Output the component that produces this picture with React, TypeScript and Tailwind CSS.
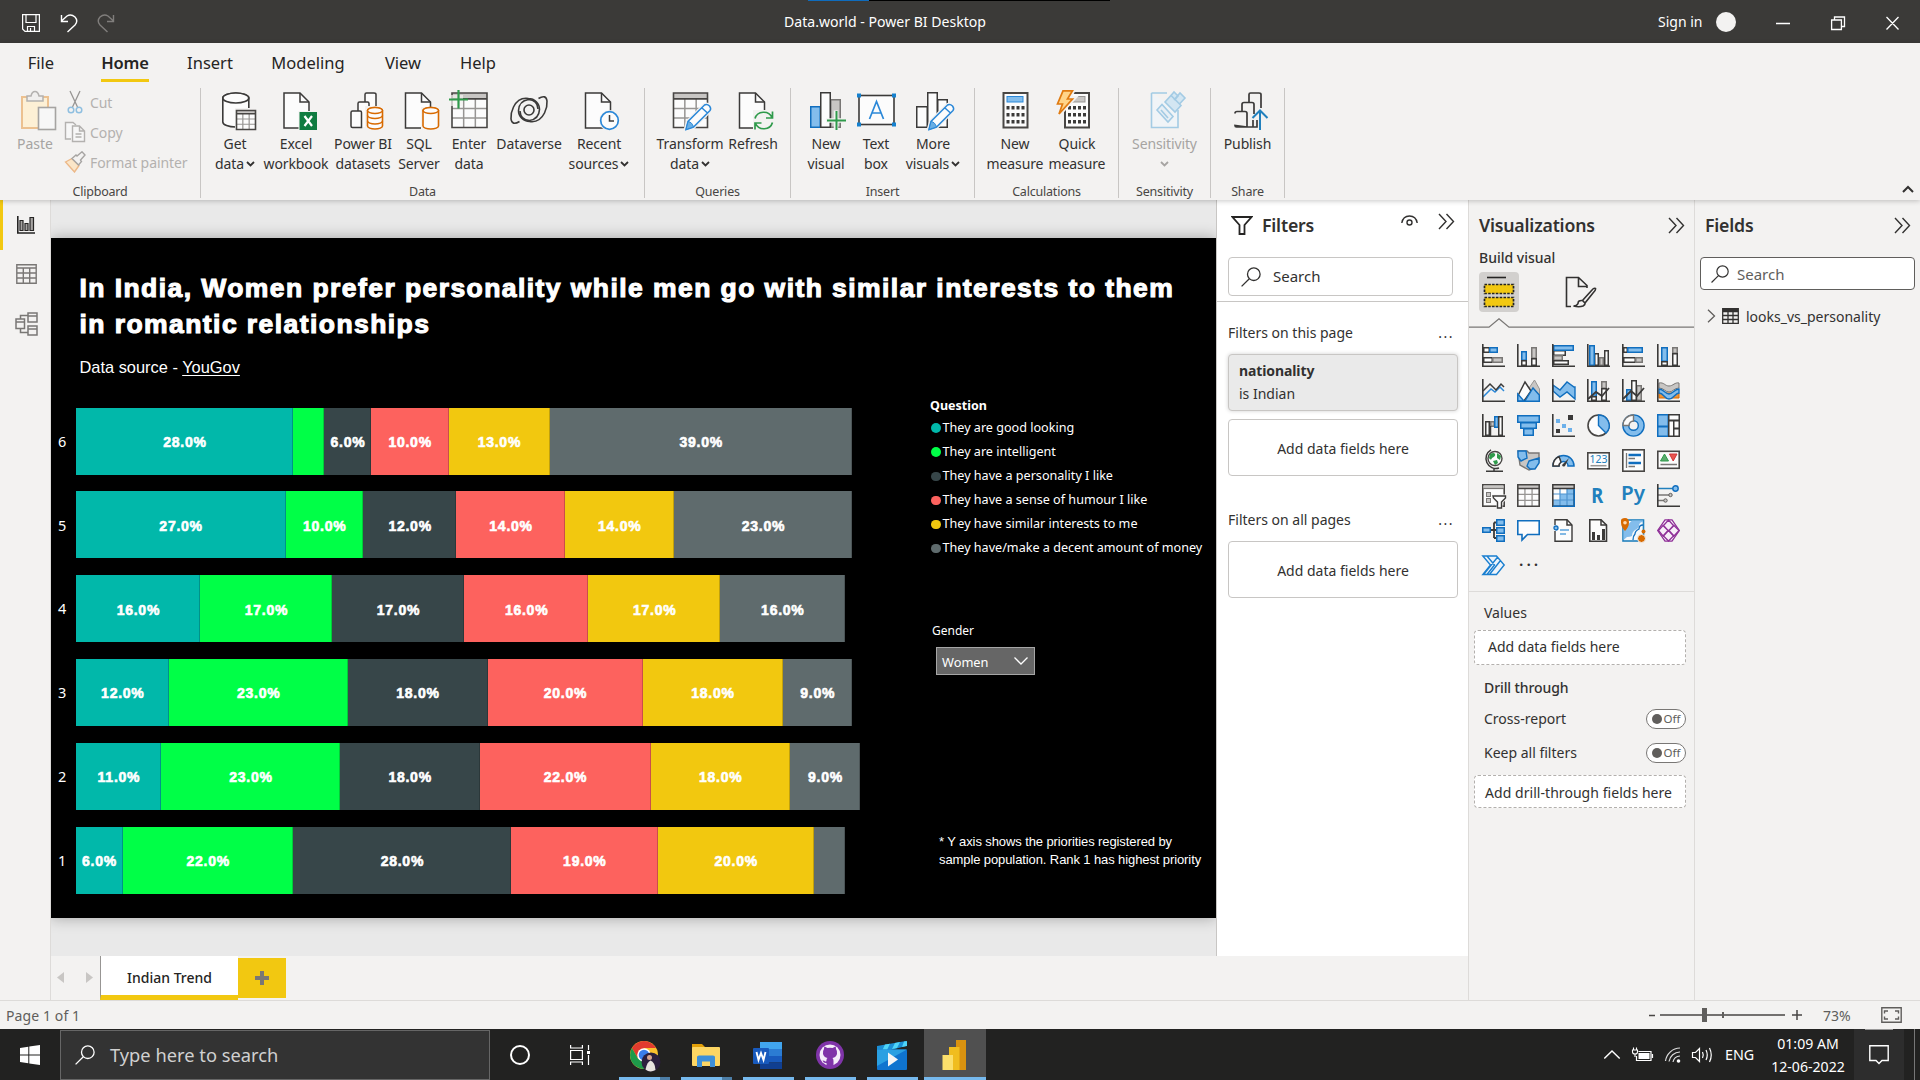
import React from "react";

type Tone = "b" | "g" | "w" | "k" | "o";

const FILL: Record<Tone, string> = { b: "#83bdec", g: "#c8c6c4", w: "#fcfcfc", k: "#3b3a39", o: "#ef9438" };
const LINE: Record<Tone, string> = { b: "#106ebe", g: "#797775", w: "#3b3a39", k: "#3b3a39", o: "#d86a00" };

function Box({ x, y, w, h, t, s = 1.5 }: { x: number; y: number; w: number; h: number; t: Tone; s?: number }) {
  return <rect x={x + s / 2} y={y + s / 2} width={w - s} height={h - s} fill={FILL[t]} stroke={LINE[t]} strokeWidth={s} />;
}

function Ln({ d, c = "#3b3a39", w = 1.5, f = "none" }: { d: string; c?: string; w?: number; f?: string }) {
  return <path d={d} stroke={c} strokeWidth={w} fill={f} />;
}

/* ---------- Ribbon icons, drawn on a 48 x 44 grid ---------- */

const PageShape = ({ x }: { x: number }) => (
  <>
    <Ln d={`M${x + 1} 3H${x + 17}L${x + 26} 12V38H${x + 1}Z`} f="#fcfcfc" />
    <Ln d={`M${x + 17} 3V12H${x + 26}`} />
  </>
);

const Pencil = () => (
  <>
    <path d="M19.500 40L22 31.500L38.500 15Q41 13.500 43.500 16Q45.500 18.500 44 20.500L27.500 37Z" fill="#fcfcfc" stroke="#f3f2f1" strokeWidth="4" />
    <Ln d="M20 39.500L22 31.500L38.500 15Q41 13.500 43.500 16Q45.500 18.500 44 20.500L27.500 37ZM36 18L41.500 23" c="#2b88d8" f="#fcfcfc" />
    <path d="M20 39.500L22 31.500Q26 32 27.500 37Z" fill="#69afe5" stroke="#2b88d8" />
  </>
);

const Cyl = ({ x, y, w, h, c, rings = false }: { x: number; y: number; w: number; h: number; c: string; rings?: boolean }) => {
  const r = w / 2;
  const k = w > 20 ? 5 : 3;
  return (
    <>
      <path
        d={`M${x} ${y + k}V${y + h - k}A${r} ${k} 0 0 0 ${x + w} ${y + h - k}V${y + k}A${r} ${k} 0 0 0 ${x} ${y + k}`}
        fill="#fcfcfc"
        stroke={c}
        strokeWidth="1.600"
      />
      <ellipse cx={x + r} cy={y + k} rx={r} ry={k} fill="#fcfcfc" stroke={c} strokeWidth="1.600" />
      {rings && (
        <Ln
          c={c}
          d={`M${x} ${y + 8}A${r} ${k} 0 0 0 ${x + w} ${y + 8}M${x} ${y + 13.5}A${r} ${k} 0 0 0 ${x + w} ${y + 13.5}`}
        />
      )}
    </>
  );
};

const GridShape = ({ x, y, w, h, s = 1.5 }: { x: number; y: number; w: number; h: number; s?: number }) => {
  const hd = h * 0.17;
  const rh = (h - hd) / 3;
  return (
    <>
      <rect x={x} y={y} width={w} height={h} fill="#fcfcfc" />
      <rect x={x} y={y} width={w} height={hd} fill="#c8c6c4" />
      <path
        d={`M${x} ${y + hd + rh}h${w}M${x} ${y + hd + 2 * rh}h${w}M${x + w / 3} ${y + hd}V${y + h}M${x + (2 * w) / 3} ${y + hd}V${y + h}`}
        stroke="#979593"
        strokeWidth={s}
      />
      <path d={`M${x} ${y}h${w}v${h}h${-w}zM${x} ${y + hd}h${w}`} stroke="#484644" strokeWidth="1.600" fill="none" />
    </>
  );
};

const Keys = ({ x }: { x: number }) => (
  <>
    {[0, 1, 2].map((r) =>
      [0, 1, 2, 3].map((c) => <rect key={`${r}${c}`} x={x + 4 + c * 5} y={16 + r * 7} width="3" height="3.500" fill="#3b3a39" />),
    )}
  </>
);

const RIBBON: Record<string, React.ReactNode> = {
  get: (
    <>
      <Cyl x={11.8} y={3} w={26} h={34} c="#3b3a39" />
      <rect x="24" y="18" width="22" height="23" fill="#f3f2f1" />
      <GridShape x={25.5} y={20.5} w={19} h={19} s={1.2} />
    </>
  ),
  excel: (
    <>
      <PageShape x={11} />
      <rect x="26.500" y="21" width="19" height="20" fill="#f3f2f1" />
      <rect x="27.500" y="22" width="17.500" height="18" fill="#107c41" />
      <Ln d="M32.500 26L40 36M40 26L32.500 36" c="#fff" w={2.2} />
    </>
  ),
  pbi: (
    <>
      <Ln d="M26 37V4.500Q26 3 27.500 3H35Q37 3 37 4.500V16" f="#fcfcfc" />
      <Ln d="M19 37V13.500Q19 12 20.500 12H28.500Q30 12 30 13.500V37" f="#fcfcfc" />
      <Ln d="M12 22.500Q12 21 13.500 21H21Q22.500 21 22.500 22.500V37.500H13.500Q12 37.500 12 36Z" f="#fcfcfc" />
      <rect x="26" y="16" width="20" height="25" fill="#f3f2f1" />
      <Cyl x={28.5} y={17.5} w={15} h={21.5} c="#d86a00" rings />
    </>
  ),
  sql: (
    <>
      <PageShape x={9.5} />
      <rect x="26" y="17" width="20" height="23" fill="#f3f2f1" />
      <Cyl x={28} y={17.5} w={15.5} h={21.5} c="#d86a00" />
    </>
  ),
  enter: (
    <>
      <GridShape x={7} y={3} w={35} h={34.500} />
      <path d="M4 5H18V16H4Z" fill="#f3f2f1" opacity=".7" />
      <Ln d="M4 9.500H23M13.500 0V18.500" c="#2f9a4b" w={2.2} />
    </>
  ),
  dataverse: (
    <g fill="none" stroke="#3b3a39" strokeWidth="1.600">
      <circle cx="24" cy="20" r="5" />
      <path d="M33.500 8.500Q41 4 42 11Q42.500 17 39.500 23Q34.500 33 24.500 31.500A11 11 0 0 1 13.500 20.500Q14 11 23.500 9.500Q32.500 10 33 19" />
      <path d="M14.500 31.500Q7 36 6 29Q5.500 23 8.500 17Q13.500 7 23.500 8.500A11 11 0 0 1 34.500 19.500Q34 29 24.500 30.500Q15.500 30 15 21" />
    </g>
  ),
  recent: (
    <>
      <PageShape x={9.5} />
      <circle cx="34.500" cy="30.500" r="10.500" fill="#f3f2f1" />
      <circle cx="34.500" cy="30.500" r="8.800" fill="#fcfcfc" stroke="#2b88d8" strokeWidth="1.700" />
      <Ln d="M34.500 25V31H39" />
    </>
  ),
  transform: (
    <>
      <GridShape x={7.5} y={3} w={34} h={34.500} />
      <Pencil />
    </>
  ),
  refresh: (
    <>
      <PageShape x={9.5} />
      <rect x="24" y="20" width="22" height="22" fill="#f3f2f1" />
      <g fill="none" stroke="#2f9a4b" strokeWidth="1.700">
        <path d="M26 28.500A9 8.500 0 0 1 43 27.500M43.500 21.500V28H37" />
        <path d="M43.500 32.500A9 8.500 0 0 1 26.500 33.500M26 39.500V33H32.500" />
      </g>
    </>
  ),
  newvisual: (
    <>
      <Box x={8} y={16} w={11} h={22} t="b" />
      <Box x={28} y={9} w={11} h={29} t="g" />
      <Box x={18} y={2} w={11} h={36} t="w" />
      <path d="M24 30.500H44M34 20.500V40" stroke="#f3f2f1" strokeWidth="4.500" />
      <Ln d="M25 30.500H44M34.500 21V40" c="#2f9a4b" w={2} />
    </>
  ),
  textbox: (
    <>
      <rect x="7" y="5.500" width="35" height="29" fill="#fcfcfc" stroke="#3b3a39" strokeWidth="1.600" />
      {[
        [5, 3.5],
        [40, 3.5],
        [5, 32.5],
        [40, 32.5],
      ].map(([x, y]) => (
        <rect key={`${x}-${y}`} x={x} y={y} width="4" height="4" fill="#1581cf" />
      ))}
      <Ln d="M17.500 29L24.500 11.500L31.500 29M20 23H29" c="#2b88d8" w={1.7} />
    </>
  ),
  morevisuals: (
    <>
      <Box x={7} y={16} w={12} h={22} t="w" />
      <Box x={28} y={9} w={11} h={29} t="w" />
      <Box x={18} y={2} w={11} h={36} t="w" />
      <Pencil />
    </>
  ),
  measure: (
    <>
      <rect x="12.500" y="3" width="24" height="34.500" fill="#fcfcfc" stroke="#484644" strokeWidth="2" />
      <rect x="16" y="6.500" width="16" height="5.500" fill="#83bdec" stroke="#2b88d8" />
      <Keys x={11.5} />
    </>
  ),
  quick: (
    <>
      <rect x="12" y="3" width="24" height="34.500" fill="#fcfcfc" stroke="#484644" strokeWidth="2" />
      <rect x="18" y="6.500" width="14" height="5.500" fill="#c8c6c4" stroke="#979593" />
      <Keys x={11} />
      <path d="M10 0H20L15.500 8.500H20L5 25L8.500 14H4Z" fill="#ffd489" stroke="#f3f2f1" strokeWidth="5" />
      <path d="M10 0.800H19.500L14.500 9H19.500L6 24L9.500 14H4.500Z" fill="#ffd489" stroke="#e07a10" strokeWidth="1.700" />
    </>
  ),
  sensitivity: (
    <g stroke="#a3cbe4" strokeWidth="1.600" fill="#e7eff5">
      <path d="M10.500 3H26M37 20V37.500H10.500V3" fill="#f0f4f7" />
      <path d="M16 20L21 14.500L32 26.500L27 32Z" />
      <path d="M20 20L27 28" fill="none" />
      <path d="M24 12L30 5.500L40 15.500L34 22ZM30 5.500L33 2L37 6L34 9.500M33 10L39 3L44 8L38 14.500" fill="#d3e6f2" />
    </g>
  ),
  publish: (
    <>
      <Ln d="M25 12V4.500Q25 3 26.500 3H35Q37 3 37 4.500V18" w={1.7} />
      <Ln d="M18 21V14.500Q18 12.500 20 12.500H28Q30 12.500 30 14.500V24" w={1.7} />
      <Ln d="M11 23.500Q11 21.500 13 21.500H21Q23 21.500 23 23.500V37H33V30M23 37H12.500Q11 37 11 35.500ZM29 37V30" w={1.7} />
      <Ln d="M36 40V20.500M28.500 28L36 20.500L43.500 28" c="#2180bd" w={2} />
    </>
  ),
};

function Chev({ className = "" }: { className?: string }) {
  return (
    <svg width="9" height="6" viewBox="0 0 9 6" className={`inline-block ${className}`}>
      <path d="M1 1L4.500 4.500L8 1" fill="none" stroke="currentColor" strokeWidth="1.800" />
    </svg>
  );
}

function Tool({ w, icon, a, b, chev, dim }: { w: string; icon: string; a: string; b?: string; chev?: boolean; dim?: boolean }) {
  return (
    <div className={`flex shrink-0 flex-col items-center tracking-[-0.12px] ${w} ${dim ? "text-[#a6a4a2]" : "text-[#323130]"}`}>
      <svg width="48" height="44" viewBox="0 0 48 44" className="shrink-0">
        {RIBBON[icon]}
      </svg>
      <span className="text-[14px] leading-5 whitespace-nowrap">{a}</span>
      <span className="flex h-5 items-center gap-0.5 text-[14px] leading-5 whitespace-nowrap">
        {b}
        {chev && <Chev />}
      </span>
    </div>
  );
}

function Group({ w, pad, label, children }: { w: string; pad: string; label: string; children: React.ReactNode }) {
  return (
    <div className={`flex h-[110px] shrink-0 flex-col border-r border-[#c8c6c4] ${w}`}>
      <div className={`flex h-[97px] shrink-0 pt-0.5 ${pad}`}>{children}</div>
      <div className="text-center text-[12.5px] leading-[14px] tracking-[-0.2px] text-[#484644]">{label}</div>
    </div>
  );
}

/* ---------- Visual gallery icons, drawn on a 23 x 23 grid ---------- */

const Axis = () => <Ln d="M.8 0V22.200H23" w={1.6} />;
const GALLERY: React.ReactNode[] = [
  <><Box x={1} y={3} w={7} h={6} t="w" /><Box x={7} y={3} w={9} h={6} t="b" /><Box x={1} y={13} w={10} h={6} t="w" /><Box x={10} y={13} w={11} h={6} t="g" /><Axis /></>,
  <><Box x={4} y={7} w={6} h={10} t="b" /><Box x={4} y={16} w={6} h={6} t="w" /><Box x={14} y={3} w={6} h={12} t="g" /><Box x={14} y={14} w={6} h={8} t="w" /><Axis /></>,
  <><Box x={1} y={6} w={13} h={6} t="w" /><Box x={1} y={11} w={10} h={6} t="g" /><Box x={1} y={16} w={16} h={5} t="w" /><Box x={1} y={1} w={21} h={6} t="b" /><Axis /></>,
  <><Box x={7} y={9} w={5} h={13} t="w" /><Box x={12} y={13} w={5} h={9} t="g" /><Box x={17} y={6} w={5} h={16} t="w" /><Box x={2} y={1} w={6} h={21} t="b" /><Axis /></>,
  <><Box x={1} y={3} w={5} h={6} t="w" /><Box x={5} y={3} w={16} h={6} t="b" /><Box x={1} y={13} w={13} h={6} t="w" /><Box x={13} y={13} w={8} h={6} t="g" /><Axis /></>,
  <><Box x={4} y={3} w={7} h={15} t="b" /><Box x={4} y={17} w={7} h={5} t="w" /><Box x={15} y={3} w={6} h={7} t="g" /><Box x={15} y={9} w={6} h={13} t="w" /><Axis /></>,

  <><Ln d="M1 18L9 10L13 13L18 8L22 12" c="#2b88d8" /><Ln d="M1 12L8 5L14 11L19 5L22 8" /><Axis /></>,
  <><path d="M10 12L17.500 1L22.500 10V22Z" fill="#c8c6c4" stroke="#979593" /><Ln d="M.8 17L8 3L14 12L7 22H.8Z" f="#fcfcfc" /><path d="M.8 15L7 22H.8ZM8 22L16 9L22.300 16V22.200H.8" fill="#83bdec" stroke="#106ebe" strokeWidth="1.400" /></>,
  <><path d="M1 6L8 11L15 3L22 8H23V20L15 13L8 18L1 12Z" fill="#83bdec" stroke="#106ebe" strokeWidth="1.400" /><Axis /></>,
  <><Box x={4} y={2} w={6} h={16} t="b" /><Box x={4} y={17} w={6} h={5} t="w" /><Box x={14} y={2} w={6} h={8} t="g" /><Box x={14} y={9} w={6} h={13} t="w" /><Ln d="M1 20L9 13L15 17L22 9" w={1.8} /><Axis /></>,
  <><Box x={4} y={10} w={6} h={12} t="b" /><Box x={14} y={6} w={6} h={16} t="g" /><Box x={9} y={1} w={6} h={21} t="w" /><Ln d="M1 20L9 12L15 17L22 9" w={1.8} /><Axis /></>,
  <><path d="M2 14H22V19H2Z" fill="#ef9438" stroke="#d86a00" /><path d="M2 4C7 3 8 7 12 7S18 3 22 4V9C17 9 16 13 12 13S7 9 2 9Z" fill="#c8c6c4" stroke="#797775" /><path d="M2 10C7 10 8 15 12 15S17 10 22 10V14C18 14 17 20 12 20S7 14 2 14Z" fill="#83bdec" stroke="#106ebe" strokeWidth="1.400" /><Axis /></>,

  <><Box x={3} y={7} w={5} h={15} t="w" /><Box x={8} y={7} w={5} h={6} t="g" /><Box x={12} y={2} w={5} h={12} t="b" /><Box x={16} y={2} w={5} h={20} t="w" /><Ln d="M8.500 12V22" /><Axis /></>,
  <><Box x={6} y={14} w={11} h={8} t="b" /><Box x={3} y={8} w={17} h={7} t="b" /><Box x={0} y={1} w={23} h={8} t="b" /></>,
  <><rect x="16" y="1" width="5" height="5" fill="#3b3a39" /><rect x="4" y="5" width="4" height="4" fill="#6cb0ea" /><rect x="10" y="10" width="4" height="4" fill="#6cb0ea" /><rect x="16" y="14" width="4" height="4" fill="#6cb0ea" /><rect x="4" y="15" width="4" height="4" fill="#3b3a39" /><Axis /></>,
  <><circle cx="11.500" cy="11.500" r="10.500" fill="#fcfcfc" stroke="#484644" strokeWidth="1.600" /><path d="M11.500 1A10.500 10.500 0 0 1 19 19L11.500 11.500Z" fill="#83bdec" stroke="#106ebe" strokeWidth="1.400" /></>,
  <><circle cx="11.500" cy="11.500" r="7.700" fill="none" stroke="#106ebe" strokeWidth="7.200" /><circle cx="11.500" cy="11.500" r="7.700" fill="none" stroke="#83bdec" strokeWidth="4.400" /><path d="M1 11.500A10.500 10.500 0 0 1 11.500 1V7A4.500 4.500 0 0 0 7 11.500Z" fill="#fcfcfc" stroke="#797775" strokeWidth="1.400" /></>,
  <><Box x={0} y={0} w={12} h={13} t="b" /><Box x={0} y={12} w={12} h={11} t="b" /><Box x={11} y={0} w={12} h={7} t="w" /><Box x={11} y={6} w={7} h={17} t="w" /><Box x={16} y={6} w={7} h={9} t="w" /><Box x={16} y={14} w={7} h={9} t="w" /></>,

  <><circle cx="13" cy="9.500" r="7" fill="#fcfcfc" stroke="#484644" strokeWidth="1.400" /><path d="M8 5Q12 3 13 5T10 9Q9 12 7 9ZM15 4L19 7L18 11L15 9ZM11 12L15 11L16 14L13 16Z" fill="#2f9a4b" /><Ln d="M9 .8A10 10 0 0 0 17 19M12 19V22M4 22.200H21" /></>,
  <><path d="M1 2L10 2L12 4H22V13L18 19L12 21L3 16Z" fill="#c8c6c4" stroke="#797775" strokeWidth="1.400" /><path d="M1 2H9L10 9L4 12L1 8ZM12 12L22 9V14L18 20L13 20L10 17Z" fill="#83bdec" stroke="#106ebe" strokeWidth="1.400" /></>,
  <><path d="M1 17A10.500 10.500 0 0 1 22 17H16A4.500 4.500 0 0 0 7 17Z" fill="#83bdec" stroke="#106ebe" strokeWidth="1.500" /><path d="M1 17A10.500 10.500 0 0 1 7 7.500L9 13A5 5 0 0 0 7 17Z" fill="#fcfcfc" stroke="#3b3a39" strokeWidth="1.500" /><path d="M10 16L17 9L13 17A2 2 0 0 1 10 16Z" fill="#3b3a39" /></>,
  <><rect x=".8" y="3.800" width="21.400" height="16" fill="#fcfcfc" stroke="#484644" strokeWidth="1.600" /><text x="2.500" y="14" fontSize="10.500" textLength="18" fill="#2180bd">123</text><Ln d="M3.500 16.700H19.500" c="#979593" /></>,
  <><rect x=".8" y=".8" width="21.400" height="21.400" fill="#fcfcfc" stroke="#484644" strokeWidth="1.600" /><Ln d="M4.500 4V19M6.500 9.500H13M6.500 17.500H13" c="#797775" w={1.3} /><Ln d="M6.500 6H19M6.500 14H19" c="#106ebe" w={2.5} /></>,
  <><rect x=".8" y="2.300" width="21.400" height="17" fill="#fcfcfc" stroke="#484644" strokeWidth="1.600" /><path d="M3.500 12L7.500 5L11.500 12Z" fill="#5aab6c" stroke="#2f9a4b" /><path d="M12.500 5H20L16.200 12Z" fill="#e8554d" stroke="#d13438" /><Ln d="M3.500 15.500H20" c="#797775" /></>,

  <><rect x=".8" y=".8" width="21.400" height="21.400" fill="#fcfcfc" stroke="#484644" strokeWidth="1.600" /><path d="M1.500 1.500H21.500V4H1.500Z" fill="#c8c6c4" /><Ln d="M1 4.500H22" c="#797775" w={1.2} /><Box x={4} y={8} w={5} h={5} t="g" s={1} /><Box x={4} y={14} w={5} h={5} t="g" s={1} /><path d="M10 10.500H25V15L20.500 19V25H14.500V19L10 15Z" fill="#f3f2f1" /><path d="M11 12H23.500V14L19.500 18V24H15.500V18L11.500 14Z" fill="#fcfcfc" stroke="#3b3a39" strokeWidth="1.400" /></>,
  <GridShape x={0.8} y={0.8} w={21.4} h={21.4} s={1.3} />,
  <><rect x=".8" y=".8" width="21.400" height="21.400" fill="#fcfcfc" /><path d="M15 5H22V22H1V16H8V10H15Z" fill="#83bdec" /><path d="M1 1H22V4H1Z" fill="#c8c6c4" /><Ln d="M1 10H22M1 16H22M8 5V22M15 5V22" c="#4f94d0" w={1.2} /><Ln d="M.8 .8H22.200V22.200H.8ZM.8 4.500H22.200" c="#3b3a39" /><Ln d="M.8 22.200H22.200V5" c="#106ebe" /></>,
  <text x="4.200" y="18.500" fontSize="20.500" fontWeight="700" fill="#2180bd" textLength="12" lengthAdjust="spacingAndGlyphs">R</text>,
  <text x="-1" y="16" fontSize="20" fontWeight="600" fill="#2180bd" textLength="24" lengthAdjust="spacingAndGlyphs">Py</text>,
  <><Ln d="M1 4.500H17" c="#2180bd" /><circle cx="18.500" cy="4.500" r="2.700" fill="#83bdec" stroke="#106ebe" strokeWidth="1.400" /><Ln d="M1 11H12M1 16.500H7" c="#797775" /><circle cx="13.500" cy="11" r="1.700" fill="#c8c6c4" stroke="#605e5c" /><circle cx="8.500" cy="16.500" r="1.700" fill="#c8c6c4" stroke="#605e5c" /><Axis /></>,

  <><Ln d="M8 11H14M12 3.500V19M12 3.500H15M12 19H15" w={1.8} /><Box x={0} y={8} w={9} h={6} t="b" /><Box x={14} y={0} w={9} h={7} t="b" /><Box x={14} y={8} w={9} h={7} t="b" /><Box x={14} y={16} w={9} h={7} t="b" /></>,
  <Ln d="M.8 1.800H22.200V15.500H10.500L5 21V15.500H.8Z" c="#106ebe" w={1.6} f="#fcfcfc" />,
  <><Ln d="M3 6V.8H15L20 6V22.200H3V12" f="#fcfcfc" w={1.4} /><Ln d="M15 .8V6H20" /><circle cx="4" cy="9" r="2" fill="#83bdec" stroke="#106ebe" strokeWidth="1.300" /><Ln d="M8 11H17M8 15H14" c="#5ba3dc" /></>,
  <><Ln d="M2.800 .8H14L19.500 6V22.200H2.800Z" f="#fcfcfc" w={1.6} /><Ln d="M14 .8V6H19.500" /><path d="M5 13H8V21H5ZM10 16H13V21H10ZM15 10H18V21H15Z" fill="#3b3a39" /></>,
  <><rect x="1" y="1" width="20.500" height="21" fill="#f6f8fa" stroke="#2180bd" strokeWidth="1.600" /><path d="M10 1.500H21V3Q17 3 17 7Q16 10 13 11Q10 13 10 17Q8 18 5 18L1.500 21V10Z" fill="#83bdec" /><path d="M21 6Q17 6 17 10Q13 12 13 15Q11 17 11 21" fill="none" stroke="#106ebe" strokeWidth="1.300" /><path d="M-1 1.500Q-1 -1 3 -1Q7 -1 7 3.500Q7 8 3 12Q-1 8 -1 3.500Z" fill="#d86a00" /><circle cx="3" cy="3.800" r="1.800" fill="#fcd9b0" /><circle cx="19.500" cy="19.500" r="4" fill="#d86a00" stroke="#f3f2f1" /><circle cx="21.500" cy="12.500" r="2" fill="#d86a00" /></>,
  <g fill="#f7eef8" stroke="#8f3098" strokeWidth="1.300"><path d="M8 .8H15L22.300 11.500L15 22.200H8L.7 11.500Z" /><path d="M11.500 1L16.500 6.500L11.500 12L6.500 6.500ZM11.500 11.500L16.500 17L11.500 22L6.500 17ZM6 6.500L11 11.500L6 17L1.500 11.500ZM17 6.500L22 11.500L17 17L12 11.500Z" /></g>,

  <Ln d="M.8 2H14.500L22.200 11L14.500 20.500H.8L8.500 11ZM5 2L12.500 11L5 20.500M15.500 3.200L2 20M18.500 6.500L7.500 20.500" c="#1a7fd0" f="#eef4fa" w={1.4} />,
];

/* ---------- Shared pieces ---------- */

function Glass({ size, className = "" }: { size: number; className?: string }) {
  return (
    <svg width={size} height={size} viewBox="0 0 20 20" className={`shrink-0 ${className}`} fill="none" stroke="currentColor" strokeWidth="1.300">
      <circle cx="12.800" cy="7.200" r="6.300" />
      <path d="M8.300 11.800L.6 19.400" />
    </svg>
  );
}

function Collapse() {
  return (
    <svg width="17" height="17" viewBox="0 0 17 17" className="shrink-0" fill="none" stroke="#323130" strokeWidth="1.400">
      <path d="M1 1L8 8.500L1 16M8.500 1L15.500 8.500L8.500 16" />
    </svg>
  );
}

function Toggle() {
  return (
    <div className="flex h-5 w-10 items-center justify-center gap-0.5 rounded-full border border-[#797775] bg-white">
      <span className="size-2.5 rounded-full bg-[#605e5c]" />
      <span className="text-[11.500px] leading-4 text-[#605e5c]">Off</span>
    </div>
  );
}

/* ---------- Report data ---------- */

const SERIES = [
  { name: "They are good looking", bg: "bg-[#01b8aa]" },
  { name: "They are intelligent", bg: "bg-[#00ff47]" },
  { name: "They have a personality I like", bg: "bg-[#374649]" },
  { name: "They have a sense of humour I like", bg: "bg-[#fd625e]" },
  { name: "They have similar interests to me", bg: "bg-[#f2c80f]" },
  { name: "They have/make a decent amount of money", bg: "bg-[#5f6b6d]" },
];

const ROWS: { rank: number; values: number[] }[] = [
  { rank: 6, values: [28, 4, 6, 10, 13, 39] },
  { rank: 5, values: [27, 10, 12, 14, 14, 23] },
  { rank: 4, values: [16, 17, 17, 16, 17, 16] },
  { rank: 3, values: [12, 23, 18, 20, 18, 9] },
  { rank: 2, values: [11, 23, 18, 22, 18, 9] },
  { rank: 1, values: [6, 22, 28, 19, 20, 4] },
];

const PX_PER_POINT = 7.765;

function Chart() {
  return (
    <div className="flex w-[860px] flex-col gap-[16.8px]">
      {ROWS.map((r) => (
        <div key={r.rank} className="flex h-[67px] items-center">
          <span className="w-[25px] shrink-0 pl-[7px] text-[14.500px] leading-none text-white">{r.rank}</span>
          {r.values.map((v, i) => (
            <div
              key={i}
              className={`flex h-full shrink-0 items-center justify-center border-r border-black/20 pt-[3px] pl-[1.500px] ${SERIES[i].bg}`}
              style={{ width: v * PX_PER_POINT }}
            >
              {v > 4 && (
                <span className="font-['Liberation_Sans',Arial,sans-serif] text-[14px] font-bold tracking-[0.75px] text-white [-webkit-text-stroke:0.6px_white]">
                  {v.toFixed(1)}%
                </span>
              )}
            </div>
          ))}
        </div>
      ))}
    </div>
  );
}

function Report() {
  return (
    <div className="h-[680px] bg-black text-white shadow-[0_0_14px_rgba(0,0,0,0.3)]">
      <div className="flex h-[169.600px] flex-col pt-8 pl-[28.500px]">
        <h1 className="font-['Liberation_Sans',Arial,sans-serif] text-[26.500px] leading-9 font-bold tracking-[1.430px] whitespace-nowrap [-webkit-text-stroke:1.100px_white]">
          In India, Women prefer personality while men go with similar interests to them
          <br />
          in romantic relationships
        </h1>
        <p className="mt-[13px] font-['Liberation_Sans',Arial,sans-serif] text-[16.400px] leading-6">
          Data source - <span className="underline underline-offset-2">YouGov</span>
        </p>
      </div>
      <div className="flex">
        <Chart />
        <div className="-mt-[11px] flex flex-col pl-[18px]">
          <div className="pl-px text-[12.500px] leading-[18px] font-bold">Question</div>
          <div className="mt-px flex flex-col">
            {SERIES.map((s) => (
              <div key={s.name} className="flex h-[24.100px] items-center gap-0.5 pl-0.5">
                <span className={`mt-px size-[9.500px] shrink-0 rounded-full ${s.bg}`} />
                <span className="text-[12.600px] leading-5 whitespace-nowrap">{s.name}</span>
              </div>
            ))}
          </div>
          <div className="mt-[61px] pl-[3px] text-[12px] leading-5">Gender</div>
          <div className="mt-1.5 ml-[7px] flex h-7 w-[99px] items-center justify-between border border-[#a6a6a6] bg-[#666] pr-1.5 pl-[5px]">
            <span className="pt-0.5 text-[12.800px] leading-5">Women</span>
            <svg width="14" height="8" viewBox="0 0 14 8" fill="none" stroke="#fff" strokeWidth="1.300">
              <path d="M.5 .5L7 7L13.500 .5" />
            </svg>
          </div>
          <p className="mt-[158px] pl-[10px] font-['Liberation_Sans',Arial,sans-serif] text-[13px] leading-[18px] tracking-[-0.1px] whitespace-nowrap">
            * Y axis shows the priorities registered by
            <br />
            sample population. Rank 1 has highest priority
          </p>
        </div>
      </div>
    </div>
  );
}

function TitleBar() {
  return (
    <header className="relative flex h-[43px] shrink-0 items-center bg-[#3b3a38] text-white">
      <div className="absolute top-0 left-[808px] h-px w-[61px] bg-[#0f6cbd]" />
      <div className="absolute top-0 left-[869px] h-px w-[241px] bg-black" />
      <div className="flex w-[400px] items-center gap-5 pt-[3px] pl-[22px]">
        <svg width="18" height="18" viewBox="0 0 18 18" fill="none" stroke="#fff" strokeWidth="1.200">
          <path d="M.6 .6H17.400V17.400H3L.6 15ZM4 .6V8.500H14V.6M5.500 17.400V12.500H12.500V17.400M8.500 14V17.400" />
        </svg>
        <svg width="18" height="19" viewBox="0 0 18 19" fill="none" stroke="#fff" strokeWidth="1.400">
          <path d="M1.500 1V7.500H8M1.500 7L7 2Q11 -.5 15 3Q18.500 7 15 11L7.500 18" />
        </svg>
        <svg width="18" height="19" viewBox="0 0 18 19" fill="none" stroke="#807e7c" strokeWidth="1.400" className="-ml-px">
          <path d="M16.500 1V7.500H10M16.500 7L11 2Q7 -.5 3 3Q-.5 7 3 11L10.500 18" />
        </svg>
      </div>
      <div className="w-[970px] text-center text-[14.080px]">Data.world - Power BI Desktop</div>
      <div className="flex flex-1 items-center pl-[288px]">
        <span className="w-[58px] text-[14px] whitespace-nowrap">Sign in</span>
        <span className="size-5 shrink-0 rounded-full bg-[#f3f2f1]" />
        <svg width="124" height="16" viewBox="0 0 124 16" fill="none" stroke="#fff" strokeWidth="1.300" className="mt-[3px] ml-10 shrink-0">
          <path d="M0 8.500H14M55.600 5H65.400V14.500H55.600ZM58.500 5V2H68.500V11.500H65.400M110.500 2L122.500 14.500M122.500 2L110.500 14.500" />
        </svg>
      </div>
    </header>
  );
}

const TABS: { name: string; w: string; on?: boolean }[] = [
  { name: "File", w: "w-[82px]" },
  { name: "Home", w: "w-[86px]", on: true },
  { name: "Insert", w: "w-[84px]" },
  { name: "Modeling", w: "w-[112px]" },
  { name: "View", w: "w-[78px]" },
  { name: "Help", w: "w-[72px]" },
];

function Ribbon() {
  return (
    <div className="relative z-10 flex h-[157px] shrink-0 flex-col bg-[#f3f2f1] shadow-[0_1px_5px_rgba(0,0,0,0.22)]">
      <nav className="flex h-[45px] items-start pt-[7px] text-[#252423]">
        {TABS.map((t) => (
          <div key={t.name} className={`flex justify-center ${t.w}`}>
            <span
              className={`h-8 text-[16.500px] leading-[26px] ${t.on ? "border-b-[3px] border-[#f2c811] font-semibold tracking-[-0.15px]" : ""}`}
            >
              {t.name}
            </span>
          </div>
        ))}
      </nav>
      <div className="flex">
        <Group w="w-[201px]" pad="pl-2" label="Clipboard">
          <div className="flex w-[54px] flex-col items-center text-[#a6a4a2]">
            <svg width="48" height="44" viewBox="0 0 48 44">
              <rect x="11" y="7" width="26" height="31" fill="#fdf0d5" stroke="#ecc190" strokeWidth="2" />
              <path d="M16 11V6H20Q21 1.500 24 1.500T28 6H32V11Z" fill="#f0efee" stroke="#b3b1af" strokeWidth="1.500" />
              <rect x="27.500" y="17.500" width="17" height="22" fill="#f7f7f7" stroke="#a6a4a2" strokeWidth="1.600" />
            </svg>
            <span className="text-[14px] leading-5">Paste</span>
          </div>
          <div className="-mt-px flex flex-col pl-[2px] text-[14px] tracking-[-0.08px] text-[#b3b1af]">
            <div className="flex h-[26px] items-center gap-1">
              <svg width="22" height="24" viewBox="0 0 22 24" fill="none">
                <path d="M6 1L13.500 17M16 1L8.500 17" stroke="#979593" strokeWidth="1.300" />
                <circle cx="7" cy="20" r="2.800" stroke="#8fbfe0" strokeWidth="1.500" />
                <circle cx="15" cy="20" r="2.800" stroke="#8fbfe0" strokeWidth="1.500" />
              </svg>
              Cut
            </div>
            <div className="mt-1 flex h-[26px] items-center gap-1">
              <svg width="22" height="22" viewBox="0 0 22 22" fill="#f7f7f7" stroke="#b3b1af" strokeWidth="1.400">
                <path d="M7 18H1.500V1.500H9L12 4" />
                <path d="M8.500 5H15.500L20.500 10V20.500H8.500ZM15.500 5V10H20.500M11.500 13H17.500M11.500 16H17.500" />
              </svg>
              Copy
            </div>
            <div className="mt-1 flex h-[26px] items-center gap-1">
              <svg width="22" height="22" viewBox="0 0 22 22" fill="#fbe6c8" stroke="#ecb888" strokeWidth="1.400">
                <path d="M1.500 11L8 7.500L15 14.500L10.500 21Z" />
                <path d="M8 7.500L12 4L13 5L18 .8L21 4L16.500 9L17.500 10.500L14.500 14Z" fill="#f3f2f1" stroke="#a6a4a2" />
              </svg>
              Format painter
            </div>
          </div>
        </Group>
        <Group w="w-[444px]" pad="pl-1.5" label="Data">
          <Tool w="w-[56px]" icon="get" a="Get" b="data" chev />
          <Tool w="w-[66px]" icon="excel" a="Excel" b="workbook" />
          <Tool w="w-[68px]" icon="pbi" a="Power BI" b="datasets" />
          <Tool w="w-[44px]" icon="sql" a="SQL" b="Server" />
          <Tool w="w-[56px]" icon="enter" a="Enter" b="data" />
          <Tool w="w-[64px]" icon="dataverse" a="Dataverse" />
          <Tool w="w-[76px]" icon="recent" a="Recent" b="sources" chev />
        </Group>
        <Group w="w-[146px]" pad="pl-[11px]" label="Queries">
          <Tool w="w-[68px]" icon="transform" a="Transform" b="data" chev />
          <Tool w="w-[58px]" icon="refresh" a="Refresh" />
        </Group>
        <Group w="w-[184px]" pad="pl-[9px]" label="Insert">
          <Tool w="w-[52px]" icon="newvisual" a="New" b="visual" />
          <Tool w="w-[48px]" icon="textbox" a="Text" b="box" />
          <Tool w="w-[66px]" icon="morevisuals" a="More" b="visuals" chev />
        </Group>
        <Group w="w-[144px]" pad="pl-[9px]" label="Calculations">
          <Tool w="w-[62px]" icon="measure" a="New" b="measure" />
          <Tool w="w-[62px]" icon="quick" a="Quick" b="measure" />
        </Group>
        <Group w="w-[92px]" pad="justify-center" label="Sensitivity">
          <Tool w="w-[70px]" icon="sensitivity" a="Sensitivity" chev dim />
        </Group>
        <Group w="w-[74px]" pad="justify-center" label="Share">
          <Tool w="w-[60px]" icon="publish" a="Publish" />
        </Group>
        <div className="flex flex-1 items-end justify-end pr-1.5 pb-[5px]">
          <svg width="12" height="8" viewBox="0 0 12 8" fill="none" stroke="#323130" strokeWidth="2">
            <path d="M1 7L6 2L11 7" />
          </svg>
        </div>
      </div>
    </div>
  );
}

function Rail() {
  return (
    <aside className="flex w-[51px] shrink-0 flex-col border-r border-[#dddbd9] bg-[#f3f2f1]">
      <div className="flex h-[50px] items-center border-l-[3px] border-[#f2c811] pl-3.5">
        <svg width="18" height="18" viewBox="0 0 18 18" fill="#a6a4a2" stroke="#252423" strokeWidth="1.200">
          <path d="M.8 0V17H18" fill="none" strokeWidth="1.600" />
          <path d="M3 4.500H6V14.500H3ZM8 7.500H11V14.500H8ZM13 1.500H16.500V14.500H13Z" />
        </svg>
      </div>
      <div className="flex h-[48px] items-center pl-4">
        <svg width="21" height="20" viewBox="0 0 21 20" fill="none" stroke="#797775" strokeWidth="1.400">
          <path d="M.8 .8H20.200V19.200H.8ZM.8 4H20.200M.8 9H20.200M.8 14H20.200M7.300 4V19M13.700 4V19" />
        </svg>
      </div>
      <div className="mt-px flex h-[50px] items-center pl-[15px]">
        <svg width="23" height="24" viewBox="0 0 23 24" fill="none" stroke="#797775" strokeWidth="1.500">
          <path d="M13 1H22V10H13ZM13 4H22M13 14H22V23H13ZM13 17H22M1 7H9.500V16.500H1ZM1 10H9.500M5.500 7V3.500H13M5.500 16.500V20.500H13" />
        </svg>
      </div>
    </aside>
  );
}

function FiltersPane() {
  const field = "flex h-[57px] w-[230px] items-center justify-center rounded-sm border border-[#c8c6c4] bg-white pt-px text-[14px]";
  return (
    <section className="h-[756px] w-[252px] shrink-0 border-l border-[#c8c6c4] bg-white text-[#323130]">
      <div className="flex h-[102px] flex-col border-b border-[#c8c6c4] pl-[11px]">
        <div className="flex h-[50px] items-center pl-[3px]">
          <svg width="22" height="19" viewBox="0 0 22 19" fill="none" stroke="#252423" strokeWidth="1.800">
            <path d="M1.500 1H20.500L13.500 9V18H8.500V9Z" />
          </svg>
          <span className="w-[148px] pl-[9px] text-[17.700px] font-semibold tracking-[-0.2px]">Filters</span>
          <svg width="17" height="12" viewBox="0 0 17 12" fill="none" stroke="#323130" strokeWidth="1.400" className="-mt-2">
            <path d="M.8 8Q2 1 8.500 1T16.200 8" />
            <circle cx="8.500" cy="7.500" r="2.500" />
          </svg>
          <div className="-mt-2 pl-5">
            <Collapse />
          </div>
        </div>
        <div className="mt-[7px] flex h-[39px] w-[225px] items-center gap-3 rounded-sm border border-[#c8c6c4] pl-3">
          <Glass size={20} />
          <span className="pb-px text-[15px]">Search</span>
        </div>
      </div>
      <div className="flex flex-col pl-[11px]">
        <div className="mt-[17px] flex h-[27px] w-[226px] items-center justify-between text-[14px]">
          <span>Filters on this page</span>
          <span className="tracking-[1.500px]">...</span>
        </div>
        <div className="mt-2 h-[57px] w-[230px] rounded-sm border border-[#c8c6c4] bg-[#eaeaea] pt-1 pl-2.5 text-[14px] leading-[23px] shadow-[0_0_4px_rgba(0,0,0,0.18)]">
          <div className="font-bold tracking-[-0.1px]">nationality</div>
          <div>is Indian</div>
        </div>
        <div className={`mt-2 ${field}`}>Add data fields here</div>
        <div className="mt-[30px] flex h-[27px] w-[226px] items-center justify-between text-[14px]">
          <span>Filters on all pages</span>
          <span className="tracking-[1.500px]">...</span>
        </div>
        <div className={`mt-2 ${field}`}>Add data fields here</div>
      </div>
    </section>
  );
}

function VizPane() {
  return (
    <section className="flex w-[226px] shrink-0 flex-col border-l border-[#dddbd9] bg-[#f3f2f1] text-[#323130]">
      <div className="flex h-[50px] items-center justify-between pr-[9px] pl-2.5">
        <span className="text-[17.700px] font-semibold tracking-[-0.2px]">Visualizations</span>
        <Collapse />
      </div>
      <div className="pl-2.5 text-[14px] leading-4 font-medium">Build visual</div>
      <div className="mt-1.5 flex gap-[46px] pl-2.5">
        <div className="flex size-10 items-center justify-center rounded-sm bg-[#d2d0ce]">
          <svg width="32" height="32" viewBox="0 0 32 32">
            <path d="M4 1.500H23" stroke="#252423" strokeWidth="1.600" />
            <path d="M1.500 8.500H30.500V17.500H1.500ZM1.500 21.500H30.500V30.500H1.500Z" fill="#f2c811" stroke="#252423" strokeWidth="1.700" strokeDasharray="2.500 1.300" />
          </svg>
        </div>
        <svg width="32" height="32" viewBox="0 0 32 32" fill="none" stroke="#323130" strokeWidth="1.600" className="mt-1">
          <path d="M6 30.500H1.500V1.500H13.500L22 9.500V12M13.500 1.500V10.500H22" />
          <path d="M30.500 12.500Q29 11.500 27 14L17.500 24.500L20 27L28 17Q31 14 30.500 12.500ZM17.500 24.500Q13 24 13 27.500Q12 30 8.500 30Q14 31.500 18 30Q20.500 28.500 20 27" fill="#f3f2f1" />
        </svg>
      </div>
      <svg width="225" height="10" viewBox="0 0 225 10" fill="none" stroke="#797775" strokeWidth="1.300" className="mt-1.5 shrink-0">
        <path d="M0 9.200H20L30 .8L40 9.200H225" />
      </svg>
      <div className="mt-4 grid h-[247px] grid-cols-[repeat(6,23px)] content-start gap-3 pl-[13px]">
        {GALLERY.map((g, i) => (
          <svg key={i} width="23" height="23" viewBox="0 0 23 23" overflow="visible">
            {g}
          </svg>
        ))}
        <span className="pl-0.5 text-[16px] leading-[12px] font-semibold tracking-[3px]">...</span>
      </div>
      <div className="flex flex-col border-t border-[#dddbd9] pt-[11px] pr-2 text-[14px]">
        <div className="pl-[15px] leading-5">Values</div>
        <div className="mt-[7px] ml-[5px] flex h-[35px] items-center rounded-sm border border-dashed border-[#b3b0ad] bg-white pb-0.5 pl-[13px]">Add data fields here</div>
        <div className="mt-[13px] pl-[15px] leading-5 font-medium tracking-[-0.1px] text-[#323130]">Drill through</div>
        <div className="mt-[11px] flex h-5 items-center justify-between pl-[15px]">
          <span className="pb-px">Cross-report</span>
          <Toggle />
        </div>
        <div className="mt-3.5 flex h-5 items-center justify-between pl-[15px]">
          <span className="pb-px">Keep all filters</span>
          <Toggle />
        </div>
        <div className="mt-3 ml-[5px] flex h-[33px] items-center rounded-sm border border-dashed border-[#b3b0ad] bg-white pt-px pl-2.5 tracking-[0.050px] whitespace-nowrap">
          Add drill-through fields here
        </div>
      </div>
    </section>
  );
}

function FieldsPane() {
  return (
    <section className="flex-1 border-l border-[#dddbd9] bg-[#f3f2f1] text-[#323130]">
      <div className="flex h-[50px] items-center justify-between pr-[9px] pl-2.5">
        <span className="text-[17.700px] font-semibold tracking-[-0.2px]">Fields</span>
        <Collapse />
      </div>
      <div className="mt-[7px] ml-[5px] flex h-[33px] w-[215px] items-center gap-2 rounded-sm border border-[#605e5c] bg-white pl-2.5">
        <Glass size={18} />
        <span className="pt-0.5 text-[15px] text-[#605e5c]">Search</span>
      </div>
      <div className="mt-3.5 flex h-6 items-center pl-[12px]">
        <svg width="9" height="14" viewBox="0 0 9 14" fill="none" stroke="#605e5c" strokeWidth="1.300">
          <path d="M1 .8L7.500 7L1 13.200" />
        </svg>
        <svg width="17" height="16" viewBox="0 0 17 16" fill="none" stroke="#323130" strokeWidth="1.300" className="ml-1.5">
          <path d="M.7 .7H16.300V15.300H.7ZM.7 3.500H16.300M.7 7.500H16.300M.7 11.500H16.300M6 3V15M11 3V15M.7 2H16.300" />
        </svg>
        <span className="pl-[7px] text-[14px]">looks_vs_personality</span>
      </div>
    </section>
  );
}

function PageTabs() {
  return (
    <div className="flex h-11 shrink-0 bg-[#f3f2f1]">
      <div className="flex w-[49px] items-center gap-[22px] pb-0.5 pl-1.5">
        <svg width="7" height="11" viewBox="0 0 7 11" fill="#c8c6c4">
          <path d="M7 0V11L0 5.500Z" />
        </svg>
        <svg width="7" height="11" viewBox="0 0 7 11" fill="#c8c6c4">
          <path d="M0 0V11L7 5.500Z" />
        </svg>
      </div>
      <div className="flex w-[138px] items-center justify-center border-b-[5px] border-l border-b-[#f2c811] border-l-[#979593] bg-white pt-[3px] text-[14px] font-medium text-[#252423]">
        Indian Trend
      </div>
      <div className="mt-0.5 flex h-10 w-12 items-center justify-center bg-[#f2c811]">
        <svg width="14" height="14" viewBox="0 0 14 14" stroke="#797775" strokeWidth="4">
          <path d="M7 0V14M0 7H14" />
        </svg>
      </div>
    </div>
  );
}

function StatusBar() {
  return (
    <div className="flex h-[29px] shrink-0 items-center justify-between border-t border-[#dddbd9] bg-[#f3f2f1] pr-[18px] pl-1.5 text-[14px] text-[#605e5c]">
      <span className="tracking-[0.100px]">Page 1 of 1</span>
      <div className="flex items-center">
        <svg width="154" height="16" viewBox="0 0 154 16" className="mr-[20px]">
          <path d="M0 8.500H6M11 8H136M143 8H153M148 3V13" stroke="#484644" strokeWidth="1.500" />
          <path d="M53 1H58V15H53ZM73 5H75V11H73Z" fill="#605e5c" />
        </svg>
        <span className="w-[58px]">73%</span>
        <svg width="21" height="16" viewBox="0 0 21 16" fill="none" stroke="#605e5c" strokeWidth="1.400">
          <path d="M.8 .8H20.200V15.200H.8ZM7 4H3.500V6.500M14 4H17.500V6.500M7 12H3.500V9.500M14 12H17.500V9.500" />
        </svg>
      </div>
    </div>
  );
}

const APPS: { key: string; icon: React.ReactNode; split?: boolean; on?: boolean }[] = [
  {
    key: "chrome",
    split: true,
    icon: (
      <>
        <circle cx="15" cy="15" r="14" fill="#fbc02d" />
        <path d="M2.900 8A14 14 0 0 1 27.100 8H15L9 18.500Z" fill="#e23b2e" />
        <path d="M2.900 8A14 14 0 0 0 15 29L21 18.500L9 18.500Z" fill="#1e9a4a" />
        <circle cx="15" cy="15" r="6.800" fill="#fff" />
        <circle cx="15" cy="15" r="5.300" fill="#3b7de9" />
        <circle cx="22" cy="22" r="9.500" fill="#2c1f3d" />
        <path d="M16.500 29.500Q18 22 21.500 20.500Q26 22 26.500 30Q21 33 16.500 29.500Z" fill="#e8e3e0" />
        <circle cx="20.500" cy="17.500" r="2.500" fill="#d8a48f" />
      </>
    ),
  },
  {
    key: "explorer",
    split: true,
    icon: (
      <>
        <path d="M1 4H11L14 7V12H1Z" fill="#e3a008" />
        <rect x="1" y="7" width="28" height="19" rx="1" fill="#fdd663" />
        <path d="M6 27V17Q6 15.500 8 15.500H22Q24 15.500 24 17V27H19V21.500H11V27Z" fill="#3d8fd8" />
      </>
    ),
  },
  {
    key: "word",
    icon: (
      <>
        <path d="M7 2H29V9H7Z" fill="#41a5ee" />
        <path d="M7 9H29V16H7Z" fill="#2b7cd3" />
        <path d="M7 16H29V22.500H7Z" fill="#185abd" />
        <path d="M7 22.500H29V29H7Z" fill="#103f91" />
        <rect x="0" y="8" width="16" height="16" rx="1" fill="#185abd" />
        <path d="M3.500 12L5.500 20L8 13L10.500 20L12.500 12" stroke="#fff" strokeWidth="1.900" fill="none" />
      </>
    ),
  },
  {
    key: "github",
    icon: (
      <>
        <circle cx="15" cy="15" r="14" fill="#8034a9" />
        <circle cx="15" cy="15" r="10.500" fill="#f5eefa" />
        <path d="M9 9Q9 7 9.500 6.500Q11 7 12.500 8Q15 7.500 17.500 8Q19 7 20.500 6.500Q21 7 21 9Q22.500 11 22 14Q21 17.500 17.500 18Q18.500 19 18.500 21V26H11.500V23Q8.500 23.500 7.500 20.500Q9.500 20.500 10.500 21.500Q11.500 22 11.500 20Q11.500 18.500 12.500 18Q9 17.500 8 14Q7.500 11 9 9Z" fill="#8034a9" />
      </>
    ),
  },
  {
    key: "movies",
    icon: (
      <>
        <path d="M0 6L29 1V6L2 13H0Z" fill="#1b8fd6" />
        <path d="M8 4.500L13 3.700L10 10L5 11ZM18 3L23 2L20 8L15 9ZM27 1.500L30 1V6L25 7Z" fill="#4fd4f7" />
        <rect x="0" y="9.500" width="30" height="20.500" rx="1" fill="#0f74cf" />
        <path d="M0 9.500H30L0 26Z" fill="#2aa0e2" />
        <path d="M11 12.500L21 19.500L11 26.500Z" fill="#f5f5f5" />
      </>
    ),
  },
  {
    key: "powerbi",
    on: true,
    icon: (
      <>
        <rect x="17" y="0" width="10" height="30" fill="#d9920f" />
        <rect x="10" y="7" width="10.500" height="23" fill="#f0bd1f" />
        <rect x="3.500" y="15" width="10.500" height="15" fill="#fbdf6b" />
      </>
    ),
  },
];

function Taskbar() {
  return (
    <footer className="flex h-[51px] shrink-0 items-stretch bg-[#222221] text-white">
      <div className="flex w-[60px] items-center justify-center">
        <svg width="20" height="20" viewBox="0 0 20 20" fill="#fff">
          <path d="M0 3L8.300 1.800V9.500H0ZM9.300 1.600L20 0V9.500H9.300ZM0 10.500H8.300V18.200L0 17ZM9.300 10.500H20V20L9.300 18.400Z" />
        </svg>
      </div>
      <div className="mt-px flex w-[430px] items-center gap-[15px] border border-[#666] bg-[#333] pl-3.5 text-[#d0d0d0]">
        <Glass size={20} className="text-white" />
        <span className="text-[18.300px]">Type here to search</span>
      </div>
      <div className="flex w-[60px] items-center justify-center">
        <span className="size-5 rounded-full border-[2.500px] border-white" />
      </div>
      <div className="flex w-[64px] items-center pl-5">
        <svg width="20" height="20" viewBox="0 0 20 20" fill="none" stroke="#fff" strokeWidth="1.200">
          <path d="M.6 0V3H12.400V0M.6 5.500H12.400V14.500H.6ZM.6 20V17H12.400V20M18.500 0V5M18.500 10V20" />
          <path d="M17 6H20V9H17Z" fill="#fff" stroke="none" />
        </svg>
      </div>
      {APPS.map((a) => (
        <div key={a.key} className={`flex w-[62px] flex-col items-center pt-[11px] ${a.on ? "bg-[#505050]" : ""}`}>
          <svg width="30" height="30" viewBox="0 0 30 30" overflow="visible" className="mr-[3px] shrink-0">
            {a.icon}
          </svg>
          <div className={`mt-auto flex h-[3px] ${a.on ? "w-full" : "mr-px w-[51px]"}`}>
            <span className="flex-1 bg-[#76b9ed]" />
            {a.split && <span className="w-2.5 bg-[#4d7ea6]" />}
          </div>
        </div>
      ))}
      <div className="ml-auto flex items-center">
        <svg width="110" height="24" viewBox="0 0 110 24" fill="none" stroke="#fff" strokeWidth="1.400">
          <path d="M.3 15.500L8 8L15.700 15.500" />
          <path d="M34.500 10H45.500V16H34.500Z" fill="#fff" stroke="none" />
          <path d="M32.500 13V17.500H47V8.500H34.500M48.500 11V15" strokeWidth="1.200" />
          <path d="M29.500 4.500V7M32.500 4.500V7M28.500 7H33.500V9Q33.500 11 31 11T28.500 9ZM31 11V14" strokeWidth="1.100" />
          <path d="M61.500 18A15 15 0 0 1 76 5M65 18.500A11 11 0 0 1 76 9M69 19A7.500 7.500 0 0 1 76 13" strokeWidth="1.200" stroke="#ddd" />
          <circle cx="74.500" cy="18" r="1.800" fill="#fff" stroke="none" />
          <path d="M88.500 9.500H91.500L95.500 5.500V18.500L91.500 14.500H88.500Z" strokeWidth="1.200" />
          <path d="M98.500 9Q100 12 98.500 15M102 7Q104.500 12 102 17M105.500 5Q109 12 105.500 19" strokeWidth="1.200" />
        </svg>
        <span className="ml-[11px] w-[53px] text-[14.300px]">ENG</span>
        <div className="w-[60px] text-center text-[14.100px] leading-[23px] whitespace-nowrap">
          <div className="-mx-4">01:09 AM</div>
          <div className="-mx-4">12-06-2022</div>
        </div>
      </div>
      <div className="ml-[16px] flex w-[50px] flex-col items-center bg-[#2d2d2d]">
        <div className="h-px w-7 bg-[#999]" />
        <svg width="20" height="20" viewBox="0 0 20 20" fill="none" stroke="#fff" strokeWidth="1.400" className="mt-[15px]">
          <path d="M.8 .8H19.200V15.500H13L10 18.500L7 15.500H.8Z" />
        </svg>
      </div>
      <div className="mr-[5px] w-[11px] border-r border-[#777]" />
    </footer>
  );
}

export default function App() {
  return (
    <div className="flex h-[1080px] w-[1920px] flex-col overflow-hidden bg-[#f3f2f1] font-['Noto_Sans','Open_Sans',sans-serif]">
      <TitleBar />
      <Ribbon />
      <div className="flex h-[800px] shrink-0">
        <Rail />
        <main className="flex h-[800px] w-[1165px] shrink-0 flex-col">
          <div className="h-[756px] overflow-hidden bg-[#e9e9e9] pt-[38px]">
            <Report />
          </div>
          <PageTabs />
        </main>
        <FiltersPane />
        <VizPane />
        <FieldsPane />
      </div>
      <StatusBar />
      <Taskbar />
    </div>
  );
}
